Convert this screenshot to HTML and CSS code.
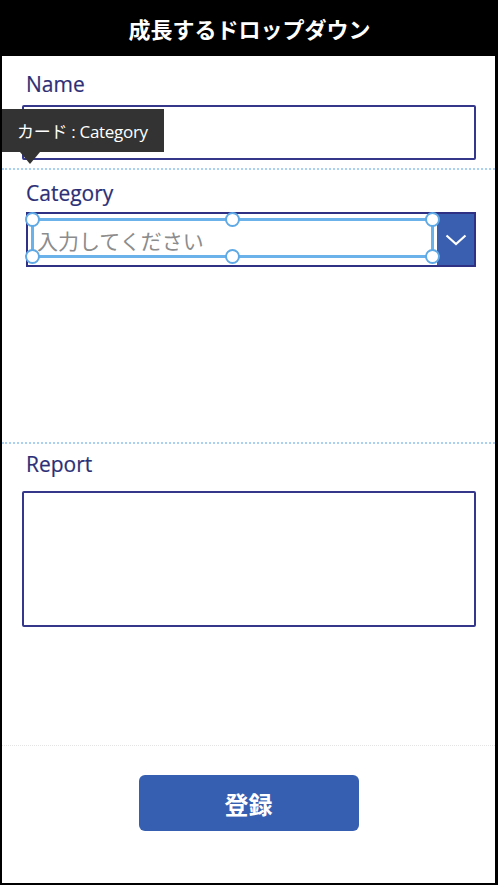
FILE: index.html
```html
<!DOCTYPE html>
<html lang="ja">
  <head>
    <meta charset="UTF-8" />
    <meta name="viewport" content="width=device-width, initial-scale=1.0" />
    <title>成長するドロップダウン</title>
    <link rel="stylesheet" href="styles.css">
  </head>
  <body>
    <div class="screen">
      <header class="title-bar">成長するドロップダウン</header>
      <div class="form">
        <section class="card card-name">
          <div class="card-label">Name</div>
          <div class="text-input"></div>
          <div class="card-tooltip">カード : Category</div>
        </section>
        <section class="card card-category">
          <div class="card-label">Category</div>
          <div class="dropdown">
            <span class="dropdown-placeholder">入力してください</span>
            <span class="dropdown-chevron">
              <svg width="22" height="12" viewBox="0 0 22 12">
                <path d="M1.5 1.5 L11 10 L20.5 1.5" fill="none" stroke="#fff" stroke-width="2.2" />
              </svg>
            </span>
            <div class="selection">
              <i class="handle handle-tl"></i>
              <i class="handle handle-tm"></i>
              <i class="handle handle-tr"></i>
              <i class="handle handle-bl"></i>
              <i class="handle handle-bm"></i>
              <i class="handle handle-br"></i>
            </div>
          </div>
        </section>
        <section class="card card-report">
          <div class="card-label">Report</div>
          <div class="text-area"></div>
        </section>
      </div>
      <footer class="actions">
        <button type="button" class="submit-button">登録</button>
      </footer>
    </div>
  </body>
</html>
```

FILE: styles.css
```css
*,
*::before,
*::after {
  box-sizing: border-box;
}

body {
  margin: 0;
  background: #fff;
  font-family: "Open Sans", "Noto Sans CJK JP", sans-serif;
}

.screen {
  display: flex;
  flex-direction: column;
  width: 498px;
  height: 885px;
  border: 2px solid #000;
  border-top: 0;
  border-right-width: 3px;
  background: #fff;
  overflow: hidden;
}

.title-bar {
  display: flex;
  align-items: center;
  justify-content: center;
  height: 56px;
  margin: 0 -3px 0 -2px;
  background: #000;
  color: #fff;
  font-family: "Noto Sans CJK JP", sans-serif;
  font-weight: bold;
  font-size: 22px;
  padding-left: 1px;
}

.card {
  position: relative;
  padding: 0 19px 0 20px;
}

.card-label {
  padding-left: 4px;
  font-size: 21px;
  line-height: 24px;
  color: #2c2f76;
  -webkit-text-stroke: 0.2px #2c2f76;
}

.card-name {
  height: 112px;
  padding-top: 16px;
}

.card-category {
  height: 274px;
  padding-top: 11px;
  border-top: 2px dotted #a9d1f2;
}

.card-report {
  height: 303px;
  padding-top: 8px;
  border-top: 2px dotted #a9d1f2;
}

.text-input {
  height: 55px;
  margin-top: 9px;
  border: 2px solid #34378a;
  border-radius: 2px;
}

.text-area {
  height: 136px;
  margin-top: 15px;
  border: 2px solid #34378a;
  border-radius: 2px;
}

.card-tooltip {
  position: absolute;
  top: 53px;
  left: -2px;
  width: 164px;
  height: 43px;
  display: flex;
  align-items: center;
  padding-left: 17px;
  background: #333;
  color: #fff;
  font-size: 17px;
  letter-spacing: -0.3px;
}

.card-tooltip::after {
  content: "";
  position: absolute;
  top: 43px;
  left: 20px;
  border-style: solid;
  border-width: 12px 10px 0 10px;
  border-color: #333 transparent transparent transparent;
}

.dropdown {
  position: relative;
  display: flex;
  align-items: center;
  height: 55px;
  margin: 7px 0 0 4px;
  border: 2px solid #2f3184;
}

.dropdown-placeholder {
  flex: 1;
  padding-left: 9px;
  font-family: "Noto Sans CJK JP", sans-serif;
  font-size: 21px;
  color: #8c8c8c;
}

.dropdown-chevron {
  display: grid;
  place-items: center;
  align-self: stretch;
  width: 37px;
  background: #3a5fb0;
}

.selection {
  position: absolute;
  top: 4px;
  left: 3px;
  right: 40px;
  bottom: 7px;
  border: 3px solid #6ab2e9;
}

.handle {
  position: absolute;
  width: 15px;
  height: 15px;
  border: 2.5px solid #5ea9e6;
  border-radius: 50%;
  background: #fff;
}

.handle-tl,
.handle-tm,
.handle-tr {
  top: -9px;
}

.handle-bl,
.handle-bm,
.handle-br {
  bottom: -9px;
}

.handle-tl,
.handle-bl {
  left: -9px;
}

.handle-tm,
.handle-bm {
  left: calc(50% - 7.5px);
}

.handle-tr,
.handle-br {
  right: -9px;
}

.actions {
  flex: 1;
  display: flex;
  justify-content: center;
  align-items: flex-start;
  padding-top: 29px;
  border-top: 1px dotted #e4e4e4;
}

.submit-button {
  width: 220px;
  height: 56px;
  border: 0;
  border-radius: 6px;
  background: #365fb1;
  color: #fff;
  font-family: "Noto Sans CJK JP", sans-serif;
  font-weight: bold;
  font-size: 24px;
  cursor: pointer;
}
```
